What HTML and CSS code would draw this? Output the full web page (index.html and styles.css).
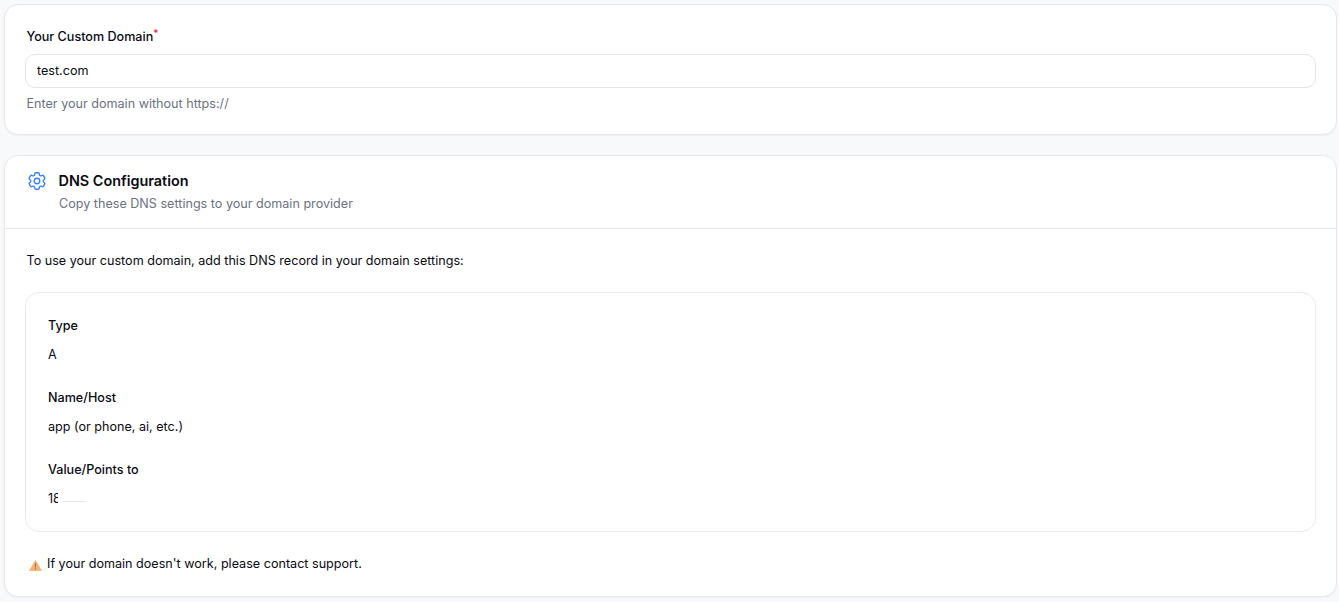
FILE: index.html
```html
<!DOCTYPE html>
<html lang="en">
<head>
<meta charset="utf-8">
<title>Custom Domain</title>
<link rel="stylesheet" href="styles.css">
</head>
<body>
<main class="page">
  <section class="card domain-card">
    <label class="field-label" for="domain">Your Custom Domain<sup class="req">*</sup></label>
    <input class="field-input" id="domain" type="text" value="test.com">
    <p class="hint">Enter your domain without https://</p>
  </section>
  <section class="card dns-card">
    <header class="dns-head">
      <svg class="gear" viewBox="0 0 24 24" fill="none" stroke="currentColor" stroke-width="1.5" stroke-linecap="round" stroke-linejoin="round"><path d="M9.594 3.94c.09-.542.56-.94 1.11-.94h2.593c.55 0 1.02.398 1.11.94l.213 1.281c.063.374.313.686.645.87.074.04.147.083.22.127.325.196.72.257 1.075.124l1.217-.456a1.125 1.125 0 0 1 1.37.49l1.296 2.247a1.125 1.125 0 0 1-.26 1.431l-1.003.827c-.293.241-.438.613-.43.992a7.723 7.723 0 0 1 0 .255c-.008.378.137.75.43.991l1.004.827c.424.35.534.955.26 1.43l-1.298 2.247a1.125 1.125 0 0 1-1.369.491l-1.217-.456c-.355-.133-.75-.072-1.076.124a6.47 6.47 0 0 1-.22.128c-.331.183-.581.495-.644.869l-.213 1.281c-.09.543-.56.94-1.11.94h-2.594c-.55 0-1.019-.398-1.11-.94l-.213-1.281c-.062-.374-.312-.686-.644-.87a6.52 6.52 0 0 1-.22-.127c-.325-.196-.72-.257-1.076-.124l-1.217.456a1.125 1.125 0 0 1-1.369-.49l-1.297-2.247a1.125 1.125 0 0 1 .26-1.431l1.004-.827c.292-.24.437-.613.43-.991a6.932 6.932 0 0 1 0-.255c.007-.38-.138-.751-.43-.992l-1.004-.827a1.125 1.125 0 0 1-.26-1.43l1.297-2.247a1.125 1.125 0 0 1 1.37-.491l1.216.456c.356.133.751.072 1.076-.124.072-.044.146-.086.22-.128.332-.183.582-.495.644-.869l.214-1.28Z"/><path d="M15 12a3 3 0 1 1-6 0 3 3 0 0 1 6 0Z"/></svg>
      <div class="dns-titles">
        <h2 class="dns-title">DNS Configuration</h2>
        <p class="dns-sub">Copy these DNS settings to your domain provider</p>
      </div>
    </header>
    <div class="dns-body">
      <p class="intro">To use your custom domain, add this DNS record in your domain settings:</p>
      <div class="record">
        <div class="rec-item">
          <div class="rec-label">Type</div>
          <div class="rec-value">A</div>
        </div>
        <div class="rec-item">
          <div class="rec-label">Name/Host</div>
          <div class="rec-value">app (or phone, ai, etc.)</div>
        </div>
        <div class="rec-item">
          <div class="rec-label">Value/Points to</div>
          <div class="rec-value rec-redacted"><span class="clip">18</span><span class="smudge"></span></div>
        </div>
      </div>
      <p class="note">
        <svg class="warn" viewBox="0 0 14 12"><path d="M7 .6 13.6 11.6H.4Z" fill="#f6b26f" stroke="#f6b26f" stroke-width=".8" stroke-linejoin="round"/><path d="M6.3 3.6h1.4l-.2 4.6h-1Z" fill="#8f7a66"/><rect x="6.3" y="9" width="1.4" height="1.4" fill="#8f7a66"/></svg>
        If your domain doesn't work, please contact support.
      </p>
    </div>
  </section>
</main>
</body>
</html>
```
FILE: styles.css
```css
* { box-sizing: border-box; }
html, body { margin: 0; padding: 0; height: 100%; }
body {
  background: #f8f9fb;
  color: #0a0a14;
  font-family: Inter, "Liberation Sans", sans-serif;
  font-size: 12.6px;
  line-height: 20px;
  overflow: hidden;
}
p, h2 { margin: 0; }
.page {
  display: flex;
  flex-direction: column;
  gap: 20px;
  padding: 4px 2px 0 4px;
}
.card {
  background: #fff;
  border: 1px solid #e6e8ec;
  border-radius: 14px;
  box-shadow: 0 1px 2px rgba(16, 24, 40, .04);
}
.domain-card {
  height: 131px;
  padding: 22px 20px 0;
}
.field-label {
  display: block;
  height: 23px;
  padding-left: 1.5px;
  font-weight: 500;
}
.req {
  color: #e11d48;
  font-size: 10px;
  line-height: 0;
  vertical-align: 4px;
}
.field-input {
  display: block;
  width: 100%;
  height: 34px;
  margin-top: 4px;
  padding: 0 11px 2px;
  border: 1px solid #e5e5e5;
  border-radius: 10px;
  outline: none;
  background: #fff;
  color: #0a0a14;
  font: 400 12.6px/20px Inter, "Liberation Sans", sans-serif;
}
.hint {
  margin-top: 6px;
  padding-left: 1.5px;
  color: #6b7280;
}
.dns-card { height: 442px; }
.dns-head {
  display: flex;
  gap: 10.5px;
  height: 73px;
  padding: 15px 21px 0;
  border-bottom: 1px solid #e6e8ec;
}
.gear {
  flex: none;
  width: 22px;
  height: 22px;
  margin-top: -1px;
  color: #3b82f6;
}
.dns-title {
  font-size: 14.4px;
  font-weight: 600;
  line-height: 20px;
}
.dns-sub {
  margin-top: 3px;
  padding-left: .5px;
  color: #6b7280;
}
.dns-body { padding: 22px 20px 0; }
.intro { padding-left: 1.5px; }
.record {
  height: 240px;
  margin-top: 21px;
  padding: 23px 22px 0;
  border: 1px solid #e9ebee;
  border-radius: 14px;
}
.rec-item { height: 72px; }
.rec-label { font-weight: 500; }
.rec-value { margin-top: 9px; }
.rec-redacted { display: flex; }
.clip {
  display: block;
  width: 10px;
  overflow: hidden;
}
.smudge {
  display: block;
  width: 28px;
  height: 1px;
  margin: 12px 0 0 1px;
  background: linear-gradient(90deg, #fff, #e6e6e6 20%, #e6e6e6 85%, #fff);
}
.note {
  display: flex;
  align-items: center;
  gap: 5px;
  margin-top: 22px;
  padding-left: 4px;
}
.warn {
  flex: none;
  width: 13px;
  height: 11px;
  margin-top: 2px;
}
```
